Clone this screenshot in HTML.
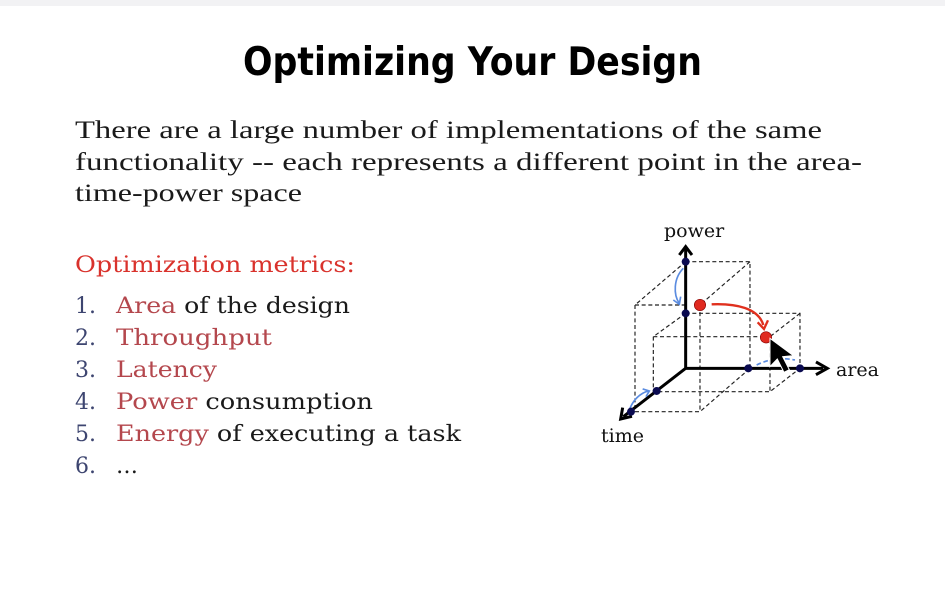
<!DOCTYPE html>
<html><head><meta charset="utf-8"><style>
html,body{margin:0;padding:0;background:#fff;}
svg{display:block}
</style></head><body>
<svg width="945" height="600" xmlns="http://www.w3.org/2000/svg">
<rect width="945" height="600" fill="#fff"/>
<rect width="945" height="6" fill="#f2f2f4"/>
<text x="243" y="75" font-family="DejaVu Sans, Liberation Sans, sans-serif" font-weight="bold" font-size="39" textLength="459" lengthAdjust="spacingAndGlyphs" fill="#000">Optimizing Your Design</text>
<g font-family="Liberation Serif, serif" font-size="25" fill="#1a1a1a">
<text x="75" y="138" textLength="747" lengthAdjust="spacingAndGlyphs">There are a large number of implementations of the same</text>
<text x="75" y="170" textLength="787" lengthAdjust="spacingAndGlyphs">functionality -- each represents a different point in the area-</text>
<text x="75" y="201" textLength="227" lengthAdjust="spacingAndGlyphs">time-power space</text>
</g>
<g font-family="DejaVu Serif, serif" font-size="22">
<text x="75" y="272" textLength="280" lengthAdjust="spacingAndGlyphs" fill="#d9322c">Optimization metrics:</text>
<g fill="#3d4570">
<text x="75" y="313">1.</text><text x="75" y="345">2.</text><text x="75" y="377">3.</text>
<text x="75" y="409">4.</text><text x="75" y="441">5.</text><text x="75" y="473">6.</text>
</g>
<text x="116" y="313" textLength="234" lengthAdjust="spacingAndGlyphs"><tspan fill="#b4474d">Area</tspan><tspan fill="#1a1a1a"> of the design</tspan></text>
<text x="116" y="345" textLength="156" lengthAdjust="spacingAndGlyphs" fill="#b4474d">Throughput</text>
<text x="116" y="377" textLength="101" lengthAdjust="spacingAndGlyphs" fill="#b4474d">Latency</text>
<text x="116" y="409" textLength="257" lengthAdjust="spacingAndGlyphs"><tspan fill="#b4474d">Power</tspan><tspan fill="#1a1a1a"> consumption</tspan></text>
<text x="116" y="441" textLength="345" lengthAdjust="spacingAndGlyphs"><tspan fill="#b4474d">Energy</tspan><tspan fill="#1a1a1a"> of executing a task</tspan></text>
<text x="116" y="473" fill="#1a1a1a">…</text>
</g>
<g transform="translate(590,215) scale(0.3333)">
<g stroke="#222" stroke-width="3.5" stroke-dasharray="12,8" fill="none">
<path d="M287 140H480V460M287 140L135 270M135 270H287M135 270V590H330L480 460M480 140L330 270V590"/>
<path d="M287 295H630V460M630 295L540 365M190 365H540V530M190 365V530H540L630 460M287 295L190 365"/>
</g>
<g stroke="#000" stroke-width="9" fill="none">
<path d="M287 460V100M287 460H700M287 460L100 605"/>
<path d="M268 120L287 95L306 120M678 441L712 460L678 479M98 578L92 612L126 604"/>
</g>
<path d="M365 268C440 265 505 280 520 330" stroke="#e0301e" stroke-width="7" fill="none"/>
<path d="M503 322L522 342L534 316" stroke="#e0301e" stroke-width="7" fill="none"/>
<path d="M280 160C250 190 250 240 268 265M250 255L268 268L272 245" stroke="#5b8ce0" stroke-width="5" fill="none"/>
<path d="M120 580C130 555 150 535 175 528M158 522L178 528L168 545" stroke="#5b8ce0" stroke-width="5" fill="none"/>
<path d="M500 450C540 430 580 428 615 435" stroke="#5b8ce0" stroke-width="5" stroke-dasharray="14,8" fill="none"/>
<g fill="#0a0a50"><circle cx="287" cy="140" r="12"/><circle cx="287" cy="295" r="12"/><circle cx="475" cy="460" r="12"/><circle cx="630" cy="460" r="12"/><circle cx="200" cy="528" r="12"/><circle cx="123" cy="590" r="12"/></g>
<g fill="#e02a20" stroke="#800" stroke-width="2"><circle cx="330" cy="270" r="17"/><circle cx="528" cy="367" r="17"/></g>
<path d="M540 370L540 455L562 432L582 472L598 464L578 425L610 422Z" fill="#000" stroke="#fff" stroke-width="3"/>
</g>
<g font-family="DejaVu Serif, serif" font-size="19" fill="#111">
<text x="664" y="237">power</text>
<text x="836" y="376">area</text>
<text x="601" y="442">time</text>
</g>
</svg>
</body></html>
